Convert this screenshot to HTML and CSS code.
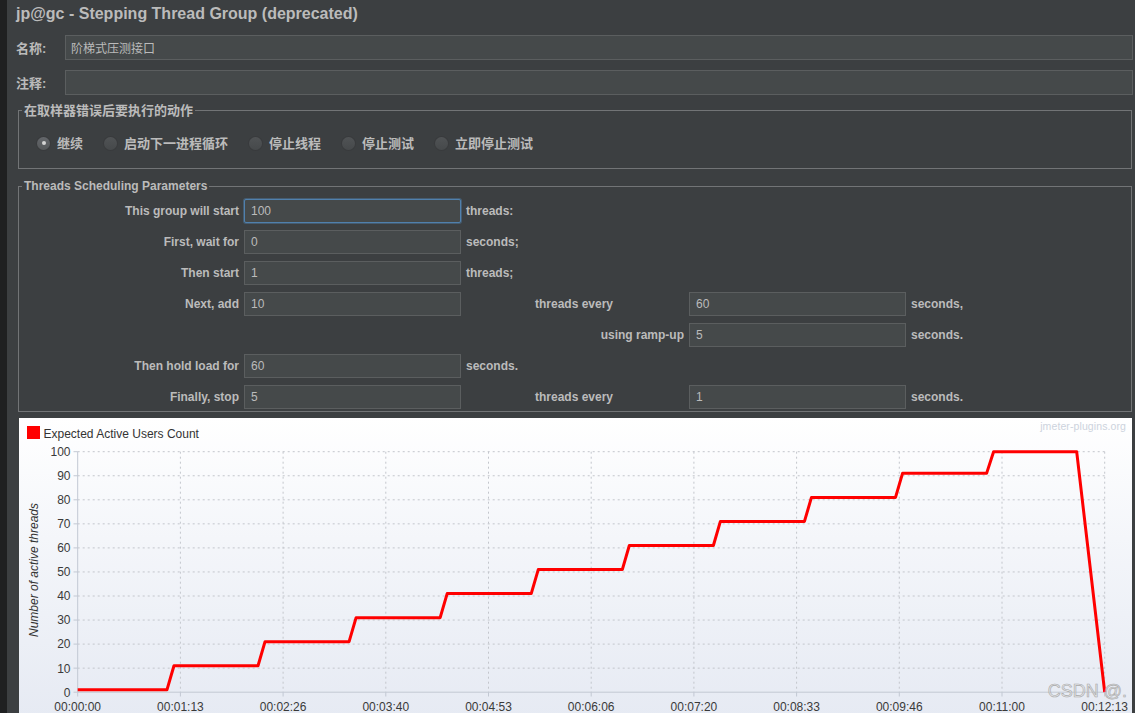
FILE: index.html
```html
<!DOCTYPE html>
<html lang="zh">
<head>
<meta charset="utf-8">
<title>jp@gc - Stepping Thread Group</title>
<link rel="stylesheet" href="styles.css">
</head>
<body>
<div class="app">
  <div class="strip"></div>
  <div class="main">
    <div class="title">jp@gc - Stepping Thread Group (deprecated)</div>

    <div class="field-row">
      <span class="field-label">名称:</span>
      <div class="text-box">阶梯式压测接口</div>
    </div>
    <div class="field-row">
      <span class="field-label">注释:</span>
      <div class="text-box"></div>
    </div>

    <fieldset class="group on-error">
      <legend>在取样器错误后要执行的动作</legend>
      <div class="radios">
        <span class="radio"><span class="dot on"></span>继续</span>
        <span class="radio"><span class="dot"></span>启动下一进程循环</span>
        <span class="radio"><span class="dot"></span>停止线程</span>
        <span class="radio"><span class="dot"></span>停止测试</span>
        <span class="radio"><span class="dot"></span>立即停止测试</span>
      </div>
    </fieldset>

    <fieldset class="group params">
      <legend>Threads Scheduling Parameters</legend>
      <div class="param-grid">
        <span class="cell p-label">This group will start</span>
        <div class="cell box focus">100</div>
        <span class="cell">threads:</span>

        <span class="cell p-label">First, wait for</span>
        <div class="cell box">0</div>
        <span class="cell">seconds;</span>

        <span class="cell p-label">Then start</span>
        <div class="cell box">1</div>
        <span class="cell">threads;</span>

        <span class="cell p-label">Next, add</span>
        <div class="cell box">10</div>
        <span class="cell c4">threads every</span>
        <div class="cell box">60</div>
        <span class="cell">seconds,</span>

        <span class="cell p-label"></span>
        <span class="cell c4 right">using ramp-up</span>
        <div class="cell box">5</div>
        <span class="cell">seconds.</span>

        <span class="cell p-label">Then hold load for</span>
        <div class="cell box">60</div>
        <span class="cell">seconds.</span>

        <span class="cell p-label">Finally, stop</span>
        <div class="cell box">5</div>
        <span class="cell c4">threads every</span>
        <div class="cell box">1</div>
        <span class="cell">seconds.</span>
      </div>
    </fieldset>

    <div class="chart">
      <svg class="chart-svg" width="1113" height="295" viewBox="19 418 1113 295" xmlns="http://www.w3.org/2000/svg">
        <rect x="27" y="426" width="13" height="13" fill="#ff0000"/>
        <text class="legend-text" x="43.5" y="438">Expected Active Users Count</text>
        <text class="brand" x="1126" y="429.5" text-anchor="end">jmeter-plugins.org</text>

        <path class="grid" d="M77.7 668.15H1104.7M77.7 644.1H1104.7M77.7 620.05H1104.7M77.7 596H1104.7M77.7 571.95H1104.7M77.7 547.9H1104.7M77.7 523.85H1104.7M77.7 499.8H1104.7M77.7 475.75H1104.7M77.7 451.7H1104.7M180.4 451.7V692.2M283.1 451.7V692.2M385.8 451.7V692.2M488.5 451.7V692.2M591.2 451.7V692.2M693.9 451.7V692.2M796.6 451.7V692.2M899.3 451.7V692.2M1002 451.7V692.2M1104.7 451.7V692.2"/>
        <path class="axis" d="M77.7 451.7V692.2H1104.7"/>
        <path class="axis" d="M73.5 692.2H77.7M73.5 668.15H77.7M73.5 644.1H77.7M73.5 620.05H77.7M73.5 596H77.7M73.5 571.95H77.7M73.5 547.9H77.7M73.5 523.85H77.7M73.5 499.8H77.7M73.5 475.75H77.7M73.5 451.7H77.7M77.7 692.2V696.5M180.4 692.2V696.5M283.1 692.2V696.5M385.8 692.2V696.5M488.5 692.2V696.5M591.2 692.2V696.5M693.9 692.2V696.5M796.6 692.2V696.5M899.3 692.2V696.5M1002 692.2V696.5M1104.7 692.2V696.5"/>

        <g class="ytick" text-anchor="end">
          <text x="70.5" y="696.5">0</text>
          <text x="70.5" y="672.5">10</text>
          <text x="70.5" y="648.4">20</text>
          <text x="70.5" y="624.4">30</text>
          <text x="70.5" y="600.3">40</text>
          <text x="70.5" y="576.3">50</text>
          <text x="70.5" y="552.2">60</text>
          <text x="70.5" y="528.2">70</text>
          <text x="70.5" y="504.1">80</text>
          <text x="70.5" y="480.1">90</text>
          <text x="70.5" y="456">100</text>
        </g>
        <text class="ylabel" x="34" y="574" text-anchor="middle" transform="rotate(-90 34 570)">Number of active threads</text>

        <g class="xtick" text-anchor="middle">
          <text x="77.7" y="711">00:00:00</text>
          <text x="180.4" y="711">00:01:13</text>
          <text x="283.1" y="711">00:02:26</text>
          <text x="385.8" y="711">00:03:40</text>
          <text x="488.5" y="711">00:04:53</text>
          <text x="591.2" y="711">00:06:06</text>
          <text x="693.9" y="711">00:07:20</text>
          <text x="796.6" y="711">00:08:33</text>
          <text x="899.3" y="711">00:09:46</text>
          <text x="1002" y="711">00:11:00</text>
          <text x="1104.7" y="711">00:12:13</text>
        </g>

        <polyline class="series" points="77.7,689.8 166.95,689.8 173.96,665.74 258.02,665.74 265.03,641.7 349.09,641.7 356.1,617.65 440.16,617.65 447.17,593.6 531.24,593.6 538.25,569.55 622.31,569.55 629.32,545.5 713.38,545.5 720.39,521.45 804.45,521.45 811.46,497.4 895.52,497.4 902.53,473.35 986.59,473.35 993.6,451.7 1076.68,451.7 1104.7,692.2"/>

        <text class="csdn" x="1127" y="697" text-anchor="end">CSDN @.</text>
      </svg>
    </div>
  </div>
</div>
</body>
</html>
```

FILE: styles.css
```css
html, body {
  margin: 0;
  padding: 0;
  width: 1135px;
  height: 713px;
  overflow: hidden;
  background: #3c3f41;
}

body {
  font-family: "Liberation Sans", "Noto Sans CJK SC", sans-serif;
  color: #bbbbbb;
}

.app {
  display: flex;
  height: 713px;
}

.strip {
  flex: none;
  width: 7px;
  background: #1f2021;
}

.main {
  flex: 1;
  min-width: 0;
  padding: 0 2px 0 9px;
}

.title {
  height: 28px;
  line-height: 28px;
  font-size: 16px;
  font-weight: bold;
  color: #bbbbbb;
  white-space: nowrap;
}

.field-row {
  display: flex;
  align-items: center;
  height: 25px;
  margin-top: 7px;
}

.field-row + .field-row {
  margin-top: 10px;
}

.field-label {
  flex: none;
  width: 49px;
  font-size: 13px;
  font-weight: bold;
  font-family: "Liberation Sans", "Noto Sans CJK SC", sans-serif;
}

.text-box {
  flex: 1;
  height: 25px;
  box-sizing: border-box;
  border: 1px solid #5b5e5f;
  background: #45494a;
  font-size: 12px;
  padding-left: 5px;
  display: flex;
  align-items: center;
  font-family: "Noto Sans CJK SC", sans-serif;
}

.group {
  margin: 7px 1px 0 2px;
  padding: 0;
  border: 1px solid #727476;
  min-width: 0;
}

.group legend {
  margin-left: 3px;
  padding: 0 2px;
  font-weight: bold;
  color: #bbbbbb;
}

.on-error legend {
  font-size: 13px;
  line-height: 16px;
  font-family: "Noto Sans CJK SC", sans-serif;
}

.radios {
  display: flex;
  align-items: center;
  height: 16px;
  padding: 17px 0 17px 18px;
  gap: 21px;
}

.radio {
  display: flex;
  align-items: center;
  gap: 7px;
  font-size: 13px;
  line-height: 16px;
  font-weight: bold;
  font-family: "Noto Sans CJK SC", sans-serif;
  white-space: nowrap;
}

.dot {
  flex: none;
  width: 13px;
  height: 13px;
  border-radius: 50%;
  background: linear-gradient(#505355, #46494b);
  box-shadow: 0 0 0 1px #393b3d;
  display: flex;
  align-items: center;
  justify-content: center;
}

.dot.on {
  background: linear-gradient(#63666a, #56595b);
}

.dot.on::after {
  content: "";
  width: 4px;
  height: 4px;
  border-radius: 50%;
  background: #d4d4d4;
}

.params {
  margin-top: 10px;
}

.params legend {
  font-size: 12px;
  line-height: 14px;
}

.param-grid {
  display: grid;
  grid-template-columns: 220px 217px 64px 149px 217px 1fr;
  grid-auto-rows: 24px;
  column-gap: 5px;
  row-gap: 7px;
  padding: 6px 0 2px 0;
  font-size: 12px;
  font-weight: bold;
}

.cell {
  display: flex;
  align-items: center;
  white-space: nowrap;
}

.p-label {
  grid-column: 1;
  justify-content: flex-end;
}

.c4 {
  grid-column: 4;
}

.c4.right {
  justify-content: flex-end;
}

.box {
  box-sizing: border-box;
  border: 1px solid #5b5e5f;
  background: #45494a;
  padding-left: 6px;
  font-weight: normal;
}

.box.focus {
  border-color: #5080ad;
  box-shadow: 0 0 0 1px rgba(80, 128, 173, 0.45);
  border-radius: 2px;
}

.chart {
  margin: 6px 1px 0 3px;
  height: 300px;
  background: linear-gradient(to bottom, #ffffff 0%, #f4f6fa 40%, #e6eaf3 100%);
}

.chart-svg {
  display: block;
}

.chart-svg text {
  font-family: "Liberation Sans", sans-serif;
}

.legend-text {
  font-size: 12px;
  fill: #333333;
}

.brand {
  font-size: 10.5px;
  fill: #cdd3dd;
  letter-spacing: 0.1px;
}

.grid {
  fill: none;
  stroke: #c3c6cc;
  stroke-width: 1;
  stroke-dasharray: 2 3;
}

.axis {
  fill: none;
  stroke: #c2c8d3;
  stroke-width: 1;
}

.ytick text,
.xtick text {
  font-size: 12px;
  fill: #3a3a3a;
}

.ylabel {
  font-size: 12px;
  font-style: italic;
  fill: #333333;
}

.series {
  fill: none;
  stroke: #ff0000;
  stroke-width: 3;
  stroke-linejoin: round;
}

.csdn {
  font-size: 18px;
  fill: rgba(225, 225, 225, 0.55);
  stroke: #a8a8a8;
  stroke-width: 0.6;
}
```
